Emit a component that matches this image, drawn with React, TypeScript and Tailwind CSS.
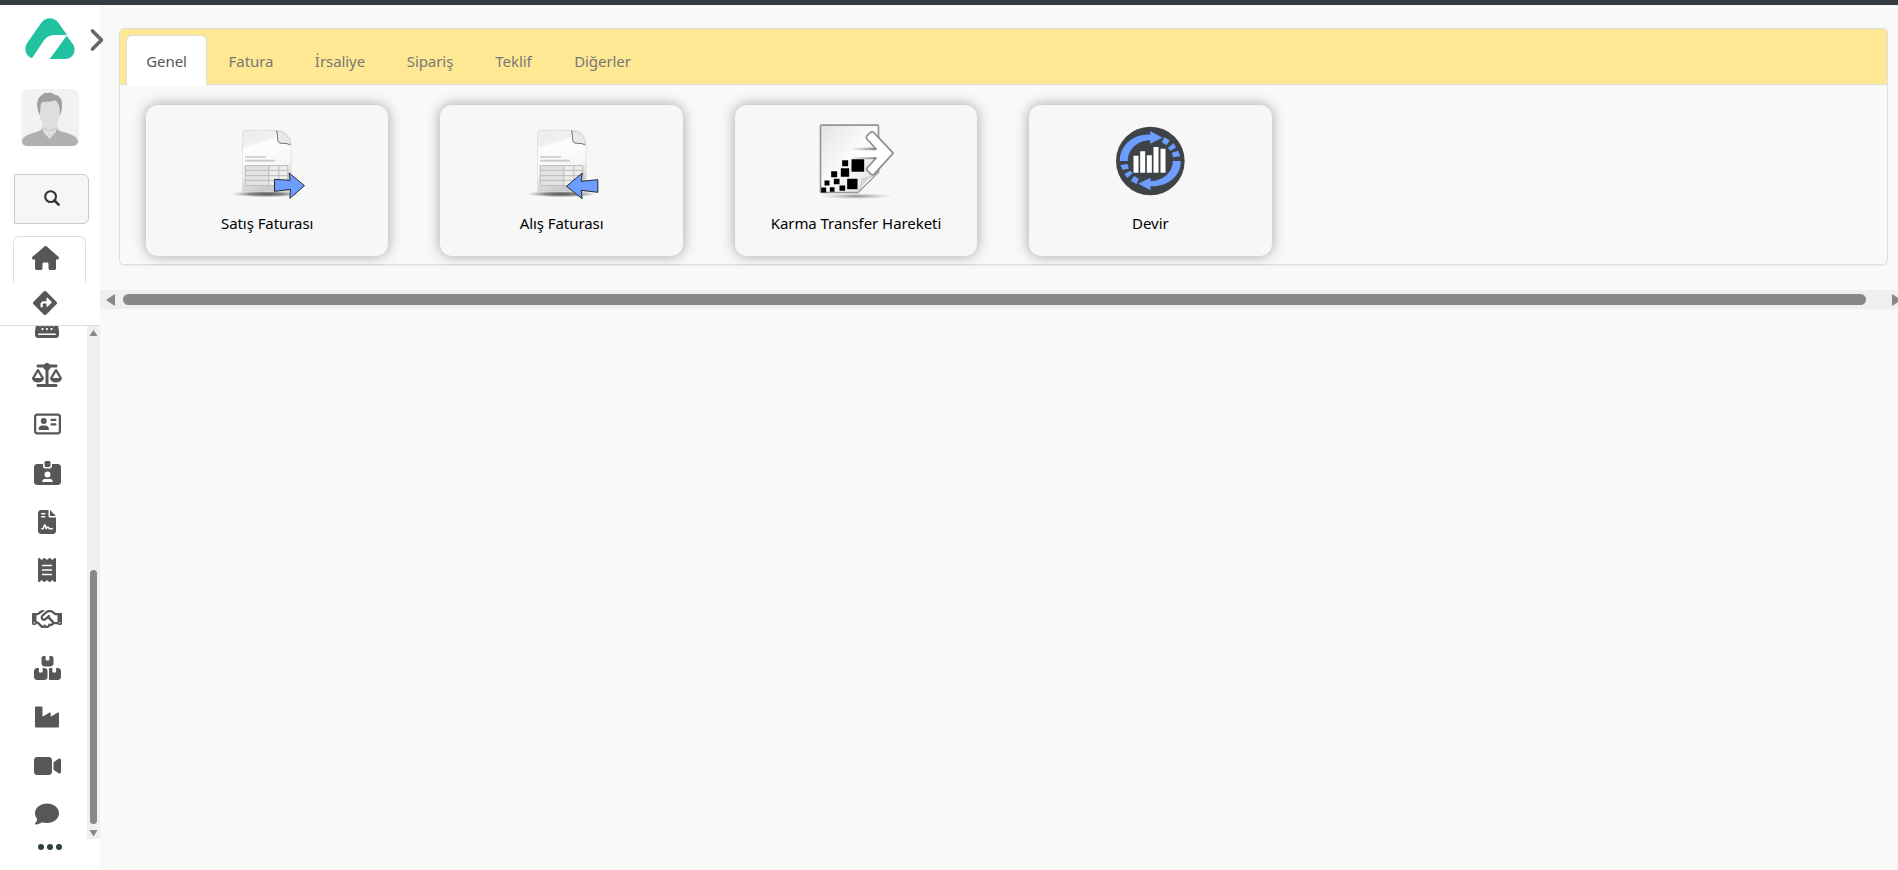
import React from "react";
import { FaIndustry } from "react-icons/fa";
import {
  FaBoxesStacked,
  FaCashRegister,
  FaComment,
  FaDiamondTurnRight,
  FaFileContract,
  FaHouse,
  FaIdCardClip,
  FaReceipt,
  FaRegAddressCard,
  FaRegHandshake,
  FaScaleBalanced,
  FaVideo,
} from "react-icons/fa6";

const menu = [
  { label: "Kasa", icon: FaCashRegister, size: "h-[24px] w-[24px]" },
  { label: "Terazi", icon: FaScaleBalanced, size: "h-[24px] w-[30px]" },
  { label: "Cari", icon: FaRegAddressCard, size: "h-[24px] w-[27px]" },
  { label: "Personel", icon: FaIdCardClip, size: "h-[24px] w-[27px]" },
  { label: "Sözleşme", icon: FaFileContract, size: "h-[24px] w-[18px]" },
  { label: "Fiş", icon: FaReceipt, size: "h-[24px] w-[18px]" },
  { label: "Anlaşma", icon: FaRegHandshake, size: "h-[24px] w-[30px]" },
  { label: "Stok", icon: FaBoxesStacked, size: "h-[24px] w-[27px]" },
  { label: "Üretim", icon: FaIndustry, size: "h-[24px] w-[24px]" },
  { label: "Video", icon: FaVideo, size: "h-[24px] w-[27px]" },
  { label: "Mesaj", icon: FaComment, size: "h-[24px] w-[24px]" },
];

const tabs = [
  { label: "Fatura", width: "w-[86px]" },
  { label: "İrsaliye", width: "w-[92px]" },
  { label: "Sipariş", width: "w-[88px]" },
  { label: "Teklif", width: "w-[79px]" },
  { label: "Diğerler", width: "w-[99px]" },
];

function Logo() {
  return (
    <svg className="ml-[25px] h-[42px] w-[50px]" viewBox="75 54 150 126">
      <path
        d="M96 175C77 166 71 147 81 130L124 68C136 50 163 50 175 68L201 105H166C148 105 138 112 130 124Z"
        fill="#22c1a0"
      />
      <path d="M200 107L219 133C230 151 221 177 195 177H149Z" fill="#22c1a0" />
    </svg>
  );
}

function Avatar() {
  return (
    <svg className="ml-[21px] h-[58px] w-[58px]" viewBox="63 266 174 174">
      <clipPath id="avatar-clip">
        <rect x="63" y="266" width="174" height="172" rx="22" />
      </clipPath>
      <g clipPath="url(#avatar-clip)">
        <rect x="63" y="266" width="174" height="172" fill="#f2f2f2" />
        <path d="M127 372H172V396L150 420L127 396Z" fill="#dedede" />
        <path
          d="M127 383C121 398 82 396 68 416Q63 424 66 438H234Q237 424 231 415C218 396 176 398 171 383L167 396Q160 404 149 416Q138 404 131 397Z"
          fill="#b0b0b0"
        />
        <path d="M127 378Q148 396 171 378V387Q150 397 129 386Z" fill="#cfcfcf" />
        <path
          d="M119 345C107 315 109 293 127 283C134 275 143 281 150 276C154 281 160 278 164 283C176 283 187 295 186 313C186 326 184 337 179 348L168 305H128Z"
          fill="#a0a0a0"
        />
        <path
          d="M122 314C125 298 145 309 167 300Q177 309 179 324Q181 337 178 348C173 370 166 388 150 388C133 388 126 371 120 350Z"
          fill="#dedede"
        />
      </g>
    </svg>
  );
}

function Invoice({ children, id }: { children: React.ReactNode; id: string }) {
  return (
    <svg className="size-20" viewBox="291.5 99 240 240">
      <defs>
        <linearGradient id={id + "-page"} x1="0" y1="0" x2="0.25" y2="1">
          <stop offset="0" stopColor="#ececec" />
          <stop offset="0.24" stopColor="#f0f0f0" />
          <stop offset="0.3" stopColor="#fdfdfd" />
          <stop offset="0.7" stopColor="#f7f7f7" />
          <stop offset="1" stopColor="#cbcbcb" />
        </linearGradient>
        <radialGradient id={id + "-shade"}>
          <stop offset="0" stopColor="#555" />
          <stop offset="0.5" stopColor="#777" stopOpacity="0.85" />
          <stop offset="1" stopColor="#aaa" stopOpacity="0" />
        </radialGradient>
      </defs>
      <ellipse cx="410" cy="312" rx="107" ry="10" fill={`url(#${id}-shade)`} />
      <path
        d="M346 121H440Q484 121 484 164V305H338V129Q338 121 346 121Z"
        fill={`url(#${id}-page)`}
        stroke="#d8d8d8"
        strokeWidth="2"
      />
      <path d="M440 122C447 140 436 159 457 160Q477 159 483 165Q480 128 440 122Z" fill="#e9e9e9" stroke="#c4c4c4" strokeWidth="2" />
      <path d="M440 122C447 140 436 160 457 160Q473 159 481 165" fill="none" stroke="#777" strokeWidth="3" />
      <path d="M346 201H408M346 212H436" stroke="#c6c6c6" strokeWidth="5" />
      <path d="M346 227H474V287H346Z" fill="#eeeeee" />
      <path d="M347 234H416M347 264H416M347 249H416M347 279H416" stroke="#e2e2e2" strokeWidth="12" />
      <path
        d="M346 227H474V287H346ZM346 241H474M346 257H474M346 271H474M417 227V287M447 227V287"
        fill="none"
        stroke="#b9b9b9"
        strokeWidth="3"
      />
      {children}
    </svg>
  );
}

function SaleIcon() {
  return (
    <Invoice id="sale">
      <path d="M434 268L481 271L478 249L524 287L480 325L482 298L434 304Z" fill="#6c9dff" stroke="#252c34" strokeWidth="3" />
    </Invoice>
  );
}

function PurchaseIcon() {
  return (
    <Invoice id="purchase">
      <path d="M425 289L472 249L469 274L519 269V307L469 301L472 326Z" fill="#6c9dff" stroke="#252c34" strokeWidth="3" />
    </Invoice>
  );
}

function TransferIcon() {
  return (
    <svg className="size-20" viewBox="288.5 98.5 240 240">
      <defs>
        <linearGradient id="transfer-page" x1="0" y1="0" x2="1" y2="1">
          <stop offset="0" stopColor="#e2e4e3" />
          <stop offset="0.5" stopColor="#fbfbfb" />
          <stop offset="1" stopColor="#dedede" />
        </linearGradient>
        <linearGradient id="transfer-fade" gradientUnits="userSpaceOnUse" x1="398" y1="0" x2="470" y2="0">
          <stop offset="0" stopColor="#999" stopOpacity="0.1" />
          <stop offset="1" stopColor="#808080" />
        </linearGradient>
        <radialGradient id="transfer-shade">
          <stop offset="0" stopColor="#888" />
          <stop offset="1" stopColor="#bbb" stopOpacity="0" />
        </radialGradient>
      </defs>
      <ellipse cx="410" cy="318" rx="112" ry="9" fill="url(#transfer-shade)" />
      <path d="M304 105H474Q476 105 476 108V245L414 307H304Q302 307 302 304V108Q302 105 304 105Z" fill="url(#transfer-page)" stroke="#959595" strokeWidth="5" />
      <path d="M414 306Q428 288 427 266Q450 268 474 246Z" fill="#f8f8f8" stroke="#aaa" strokeWidth="2" />
      <path d="M418 301Q431 285 430 264L452 256Z" fill="#d5d5d5" />
      <path d="M398 178H470L440 145Q438 139 443 135L452 127Q458 122 463 128L520 189L464 251Q459 257 453 252L442 241Q438 236 443 232L470 202H398Z" fill="#fff" />
      <path d="M470 178L440 145Q438 139 443 135L452 127Q458 122 463 128L520 189L464 251Q459 257 453 252L442 241Q438 236 443 232L470 202" fill="none" stroke="#8d8d8d" strokeWidth="5" strokeLinejoin="round" />
      <path d="M398 173H464L470 180H398ZM398 201H470L464 207H398Z" fill="url(#transfer-fade)" />
      <path
        d="M395 207h38v38h-38zM367 210h18v18h-18zM363 234h25v26h-25zM334 243h18v18h-18zM342 266h17v16h-17zM314 271h15v15h-15zM382 266h31v31h-31zM359 286h17v16h-17zM330 291h14v14h-14zM304 292h15v15h-15z"
        fill="#000"
      />
    </svg>
  );
}

function CarryOverIcon() {
  return (
    <svg className="size-20" viewBox="300.5 99 240 240">
      <circle cx="421.5" cy="213" r="103" fill="#3e4347" />
      <path d="M330 213C329 168 370 131 421 134V123L458 143L421 161V151C386 151 354 176 354 213Z" fill="#6c9dff" />
      <path
        d="M463 142L480 151L470 166L456 157ZM491 160L499 172L482 182L474 174ZM505 182L511 199L490 202L486 188Z"
        fill="#6c9dff"
      />
      <path d="M513 213C514 258 473 291 422 289V301L385 281L422 263V273C457 273 489 249 489 213Z" fill="#6c9dff" />
      <path
        d="M380 282L363 273L373 258L387 267ZM352 264L344 252L361 242L369 250ZM338 239L332 225L353 222L357 236Z"
        fill="#6c9dff"
      />
      <path d="M371 197h15v51h-15zM391 184h15v64h-15zM411 196h15v52h-15zM431 171h15v77h-15zM452 176h15v72h-15z" fill="#fff" />
    </svg>
  );
}

const cards = [
  { label: "Satış Faturası", icon: SaleIcon },
  { label: "Alış Faturası", icon: PurchaseIcon },
  { label: "Karma Transfer Hareketi", icon: TransferIcon },
  { label: "Devir", icon: CarryOverIcon },
];

function Sidebar() {
  return (
    <aside className="relative flex h-full w-[100px] shrink-0 flex-col bg-white text-[#575757]">
      <div className="h-[13px] shrink-0" />
      <Logo />
      <svg className="absolute top-[23px] left-[89px] z-10 h-[24px] w-[16px]" viewBox="0 0 16 24">
        <path d="M3.5 3L12.5 12L3.5 21" fill="none" stroke="#696969" strokeWidth="3.6" strokeLinecap="round" strokeLinejoin="round" />
      </svg>
      <div className="h-[29px] shrink-0" />
      <Avatar />
      <button
        aria-label="Ara"
        className="mt-[27px] ml-[14px] flex h-[50px] w-[75px] shrink-0 items-center justify-center rounded-r-md border border-[#c9c9c9] bg-[#f6f6f6] pb-[2px]"
      >
        <svg className="size-4" viewBox="0 0 16 16">
          <circle cx="6.6" cy="6.6" r="5.4" fill="none" stroke="#333" strokeWidth="2.1" />
          <path d="M10.5 10.5L14.6 14.6" stroke="#333" strokeWidth="2.6" strokeLinecap="round" />
        </svg>
      </button>
      <div className="mt-3 ml-[13px] flex h-[46px] w-[73px] shrink-0 justify-center rounded-t-md border border-b-0 border-[#dedede] pt-[9px] pr-[8px]">
        <FaHouse className="h-[24px] w-[27px] shrink-0" />
      </div>
      <div className="flex h-[44px] shrink-0 items-center border-b border-[#dedede] pb-px pl-[33px]">
        <FaDiamondTurnRight className="h-[24px] w-[24px]" />
      </div>
      <div className="flex h-[513px] shrink-0 overflow-hidden">
        <nav className="-mt-[24px] flex w-[87px] flex-col pl-[7px]">
          {menu.map(({ label, icon: Icon, size }) => (
            <a key={label} aria-label={label} className="flex h-[48.8px] shrink-0 items-center justify-center">
              <Icon className={"shrink-0 " + size} />
            </a>
          ))}
        </nav>
        <div className="flex w-[13px] flex-col items-center bg-[#efefef] text-[#888]">
          <svg className="mt-[4px] h-[7px] w-[9px]" viewBox="0 0 9 7">
            <path d="M4.5 0L8.6 6H.4Z" fill="currentColor" />
          </svg>
          <div className="mt-[233px] h-[254px] w-[7px] rounded-full bg-[#888]" />
          <svg className="mt-[6px] h-[7px] w-[9px]" viewBox="0 0 9 7">
            <path d="M4.5 6.4L8.6 0H.4Z" fill="currentColor" />
          </svg>
        </div>
      </div>
      <div className="mt-[5px] ml-[38px] flex gap-[3px]">
        <i className="size-[6px] rounded-full bg-[#314239]" />
        <i className="size-[6px] rounded-full bg-[#314239]" />
        <i className="size-[6px] rounded-full bg-[#314239]" />
      </div>
    </aside>
  );
}

export default function App() {
  return (
    <div className="flex h-[870px] w-full flex-col overflow-hidden bg-[#f9f9f8] font-['Noto_Sans',sans-serif] text-[15px] leading-6 tracking-[-0.06px]">
      <div className="h-[5px] shrink-0 bg-[#363d40]" />
      <div className="flex min-h-0 flex-1">
        <Sidebar />
        <main className="min-w-0 flex-1 pt-[23px]">
          <section className="mr-[10px] ml-[19px] h-[237px] rounded-[5px] border border-[#dedede] shadow-[0_1px_2px_rgba(0,0,0,0.06)]">
            <header className="flex h-[56px] items-end rounded-t-[4px] border-b border-[#dedede] bg-[#ffe893] pl-[6px] text-[#777]">
              <div className="-mb-[2px] flex h-[51px] w-[81px] items-center justify-center rounded-t-md border border-b-0 border-[#dedede] bg-white text-[#555]">
                Genel
              </div>
              <div className="-mb-[2px] ml-px flex h-[51px] items-center pt-px">
                {tabs.map((tab) => (
                  <div key={tab.label} className={"text-center " + tab.width}>
                    {tab.label}
                  </div>
                ))}
              </div>
            </header>
            <div className="flex gap-[52px] pt-[20px] pl-[26px]">
              {cards.map(({ label, icon: Icon }) => (
                <div
                  key={label}
                  className="flex h-[151px] w-[242.4px] shrink-0 flex-col items-center rounded-xl bg-[#f7f7f7] pt-[18px] text-black shadow-[0_0_14px_rgba(0,0,0,0.35)]"
                >
                  <Icon />
                  <div className="mt-[8px]">{label}</div>
                </div>
              ))}
            </div>
          </section>
          <div className="mt-[25px] flex h-[19px] items-center bg-[#efefef] text-[#888]">
            <svg className="ml-[6px] h-[12px] w-[9px]" viewBox="0 0 9 12">
              <path d="M0 6L8 .5Q9 0 9 1V11Q9 12 8 11.5Z" fill="currentColor" />
            </svg>
            <div className="ml-[8px] h-[11px] w-[1743px] rounded-full bg-[#888]" />
            <svg className="ml-[26px] h-[12px] w-[6px] shrink-0" viewBox="0 0 6 12">
              <path d="M0 1Q0 0 1 .5L6 4V8L1 11.5Q0 12 0 11Z" fill="currentColor" />
            </svg>
          </div>
        </main>
      </div>
    </div>
  );
}
